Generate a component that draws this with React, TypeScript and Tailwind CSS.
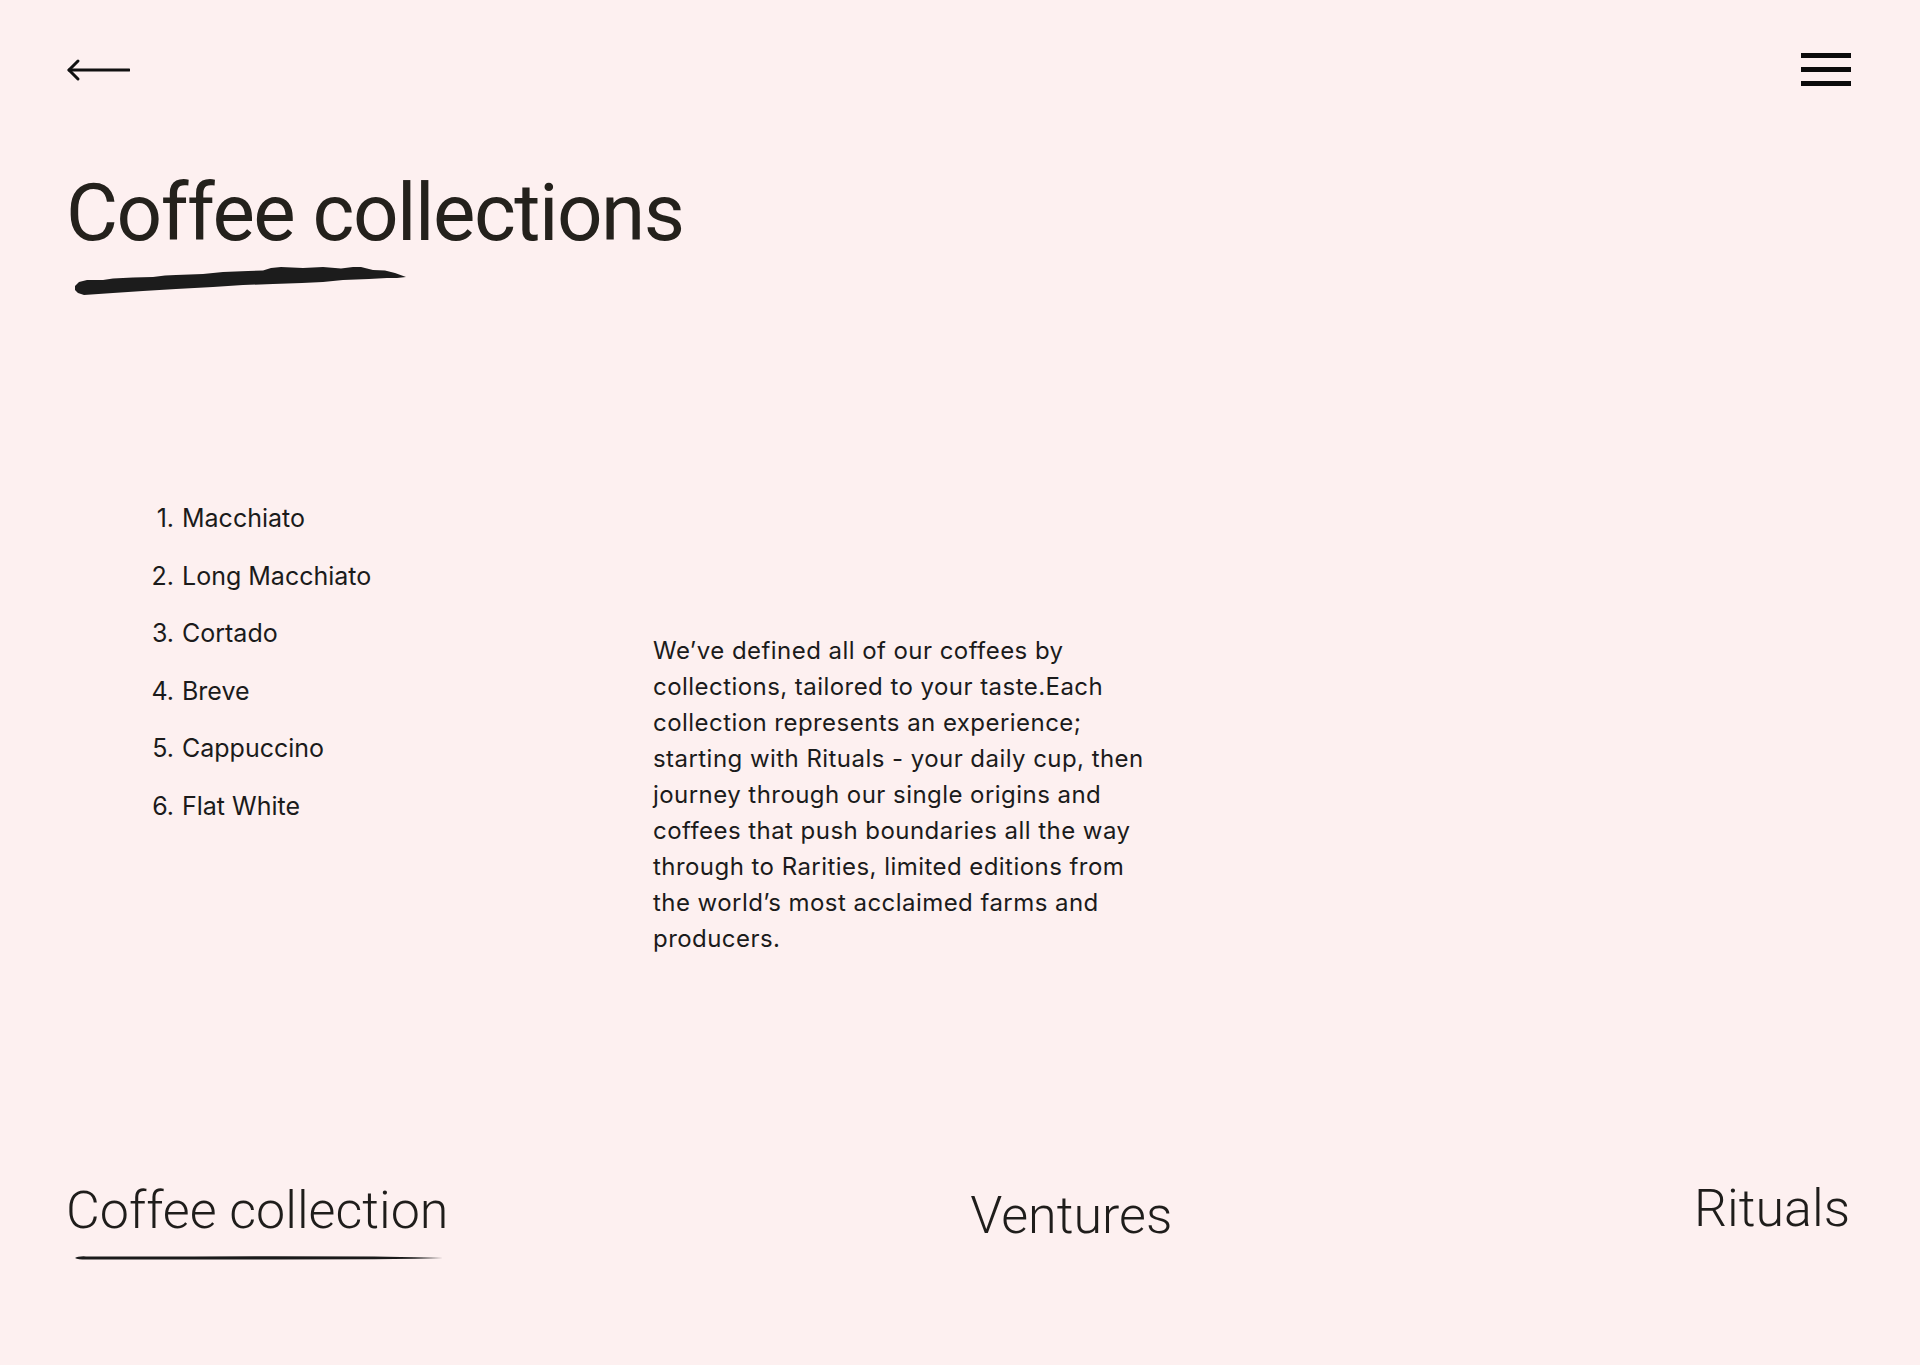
import React from "react";

const items = ["Macchiato", "Long Macchiato", "Cortado", "Breve", "Cappuccino", "Flat White"];

function BackArrow() {
  return (
    <svg width="64" height="24" viewBox="0 0 64 24" fill="none" className="block">
      <path d="M3 12 H63" stroke="#111" strokeWidth="3" strokeLinecap="round" />
      <path d="M12 3 L3 12 L12 21" stroke="#111" strokeWidth="3" strokeLinecap="round" strokeLinejoin="round" />
    </svg>
  );
}

function Hamburger() {
  return (
    <div className="flex flex-col gap-[9px] w-[50px]">
      <div className="h-[5px] bg-[#0b0b0b]" />
      <div className="h-[5px] bg-[#0b0b0b]" />
      <div className="h-[5px] bg-[#0b0b0b]" />
    </div>
  );
}

function Brush() {
  return (
    <svg width="336" height="34" viewBox="0 0 336 34" className="block">
      <path
        d="M2 22 L6 18 L14 16 L30 16 L40 14.5 L60 13.5 L80 13 L92 11.5 L103 11 L130 10 L150 8 L175 7 L190 6.5 L198 4 L208 3 L230 4 L250 3 L268 4.5 L280 3 L288 3 L300 6 L312 6.5 L322 9 L333 13 L324 14 L314 14 L296 15 L270 16 L250 18 L229 19 L200 20 L170 21 L140 23 L103 25 L70 27 L40 29 L11 31 L5 29 L2 26 Z"
        fill="#1c1c1c"
      />
    </svg>
  );
}

function Underline() {
  return (
    <svg width="370" height="6" viewBox="0 0 370 6" className="block">
      <path
        d="M1 3 Q4 1 12 1.4 L120 1.6 L200 1.2 L300 1.6 L340 2.2 L369 3 L340 3.8 L300 4.2 L200 4.4 L120 4.6 L12 4.6 Q4 4.6 1 3 Z"
        fill="#1a1a1a"
      />
    </svg>
  );
}

export default function App() {
  return (
    <div className="min-h-[1365px] w-full bg-[#fdf0f0] text-[#1f1d1b] flex flex-col px-[66px]" style={{ fontFamily: "Inter, 'Noto Sans', sans-serif" }}>
      <header className="pt-[53px] flex items-center justify-between pr-[3px]">
        <BackArrow />
        <Hamburger />
      </header>

      <h1 className="mt-[87px] text-[80px] leading-none tracking-[-1.5px] text-[#24211c]" style={{ fontFamily: "Roboto, sans-serif" }}>
        Coffee collections
      </h1>
      <div className="mt-[11px] ml-[7px]">
        <Brush />
      </div>

      <div className="mt-[192px] flex">
        <ol className="w-[587px] shrink-0">
          {items.map((it, i) => (
            <li key={it} className="flex text-[25px] leading-[57.5px] text-[#1b1b1b]">
              <span className="w-[116px] text-right pr-[8px]">{i + 1}.</span>
              <span>{it}</span>
            </li>
          ))}
        </ol>
        <p className="mt-[143px] w-[508px] text-[24px] leading-[36px] tracking-[0.45px] text-[#1b1b1b]">
          We’ve defined all of our coffees by collections, tailored to your taste.Each collection represents an experience; starting with Rituals - your daily cup, then journey through our single origins and coffees that push boundaries all the way through to Rarities, limited editions from the world’s most acclaimed farms and producers.
        </p>
      </div>

      <nav className="mt-auto pb-[104px] flex justify-between items-start pr-[4px]" style={{ fontFamily: "Roboto, sans-serif" }}>
        <div className="flex flex-col">
          <span className="text-[52px] leading-none font-light">Coffee collection</span>
          <div className="mt-[18px] ml-[8px]">
            <Underline />
          </div>
        </div>
        <span className="mt-[5px] text-[52px] leading-none font-light">Ventures</span>
        <span className="-mt-[2px] text-[52px] leading-none font-light">Rituals</span>
      </nav>
    </div>
  );
}
